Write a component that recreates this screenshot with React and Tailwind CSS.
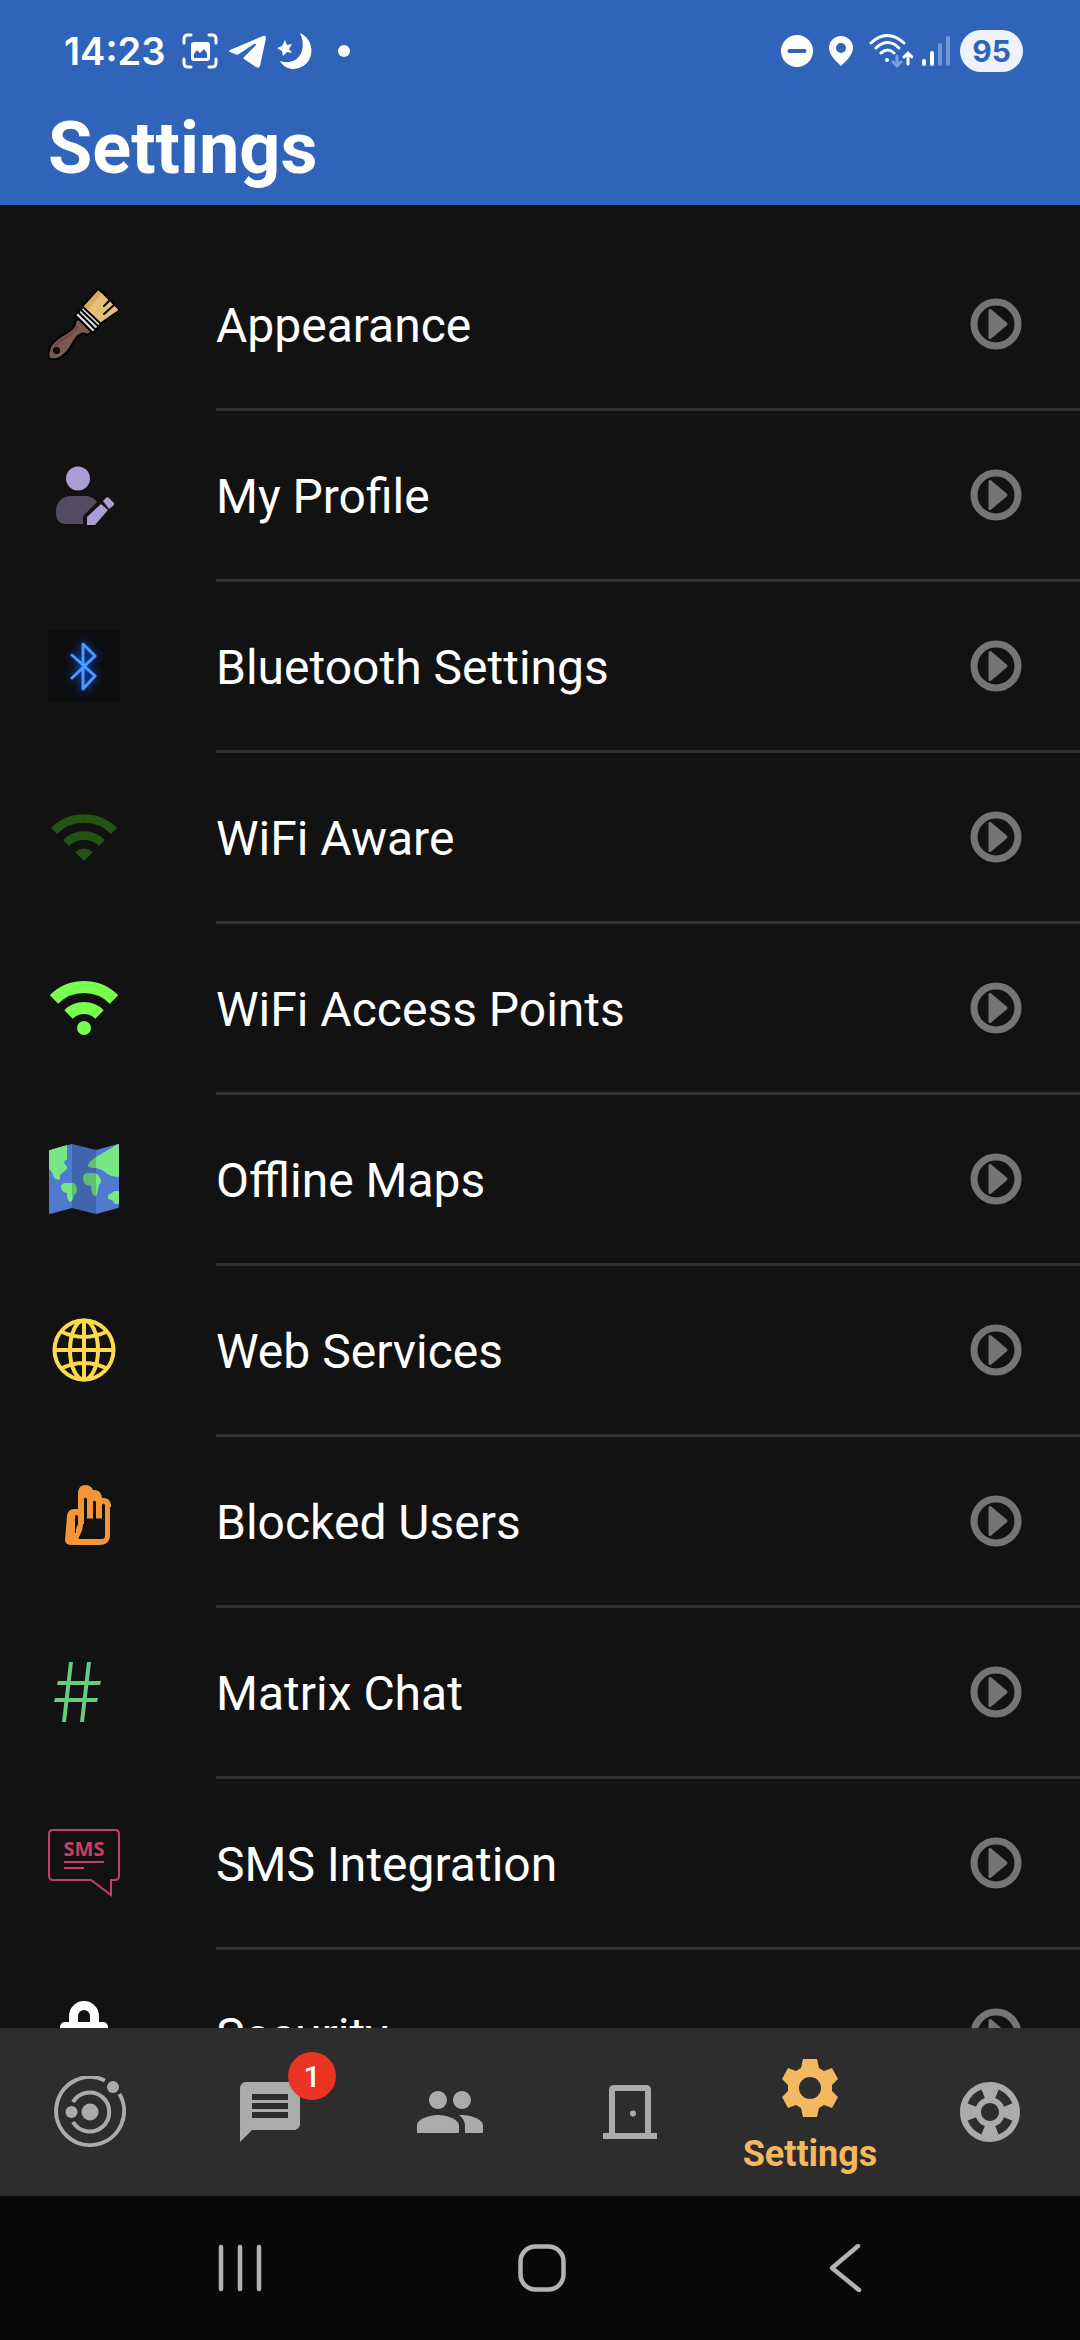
import React, { useState } from 'react';
import { MdMessage, MdPeople, MdSupport } from 'react-icons/md';

/* ---------- list icons, all on a 72 x 72 grid ---------- */

function Icon({ children, className = '' }) {
  return (
    <svg viewBox="0 0 72 72" className={`size-[72px] shrink-0 ${className}`} fill="none" aria-hidden="true">
      {children}
    </svg>
  );
}

function BrushIcon() {
  return (
    <Icon>
      <g stroke="#000" strokeWidth="2" strokeLinejoin="round" strokeLinecap="round">
        <path d="M27 33c1 5-2 8-7 11C12 49 2 54 1 63c-1 3-1 6 1 8 4 1 11 0 16-6 5-5 7-12 12-17 2-2 6-4 9-1l5-3-13-13z" fill="#7d594f" />
        <path d="M34 19 50 1l5 4 17 17-20 14z" fill="#e6bf77" />
        <path d="M27 27l8-8 18 17-8 9z" fill="#e3e3e3" />
        <path d="M30 24l18 18M33 22l18 17" />
        <path d="M61 13l-5 5M66 17l-10 9" />
        <circle cx="8.500" cy="62.500" r="2.500" fill="#121212" />
      </g>
      <path d="M36 18 50 3l3 3-13 16z" fill="#dba75c" />
      <path d="M28 37c0 5-4 8-8 10C12 51 3 57 3 65l3-5c5-6 19-12 24-20z" fill="#6a483f" />
    </Icon>
  );
}

function ProfileIcon() {
  return (
    <Icon>
      <circle cx="30" cy="19.500" r="12" fill="#ab9dd4" />
      <path d="M8 53C8 43 14 37 24 37h12c6 0 10 2 13 6L36 56c-1 1-1 2-1 9H18C11 65 8 61 8 53z" fill="#544b62" />
      <path d="M39 66v-8l14-13 7 6-13 15zM55 42l4-4 2 1 5 5v2l-5 4z" fill="#ab9dd4" />
    </Icon>
  );
}

function BluetoothIcon() {
  return (
    <Icon className="bg-[#0d0e10]">
      <path
        d="M24 25l23 21-12 13V14l12 12-23 22"
        stroke="#4b9bff"
        strokeWidth="3"
        strokeLinejoin="round"
        strokeLinecap="round"
        className="drop-shadow-[0_0_4px_#0a5cff]"
      />
    </Icon>
  );
}

function WifiAwareIcon() {
  return (
    <Icon>
      <g stroke="#245414" strokeWidth="8.600">
        <path d="M6 30a42.300 42.300 0 0 1 60 0" />
        <path d="M18 42a25.400 25.400 0 0 1 36 0" />
      </g>
      <path d="M27 51q9-7 18 0l-9 9z" fill="#245414" />
    </Icon>
  );
}

function WifiIcon() {
  return (
    <Icon>
      <g stroke="#76ff4d" strokeWidth="12">
        <path d="M6 27.500a42.400 42.400 0 0 1 60 0" />
        <path d="M20.500 42.500a22 22 0 0 1 31 0" />
      </g>
      <circle cx="36" cy="56" r="7" fill="#76ff4d" />
    </Icon>
  );
}

function MapIcon() {
  return (
    <Icon>
      <path d="M1 8q0-1 1-1l22-6 24 6 22-6q1 0 1 1v61q0 1-1 2l-22 6-24-6-22 6q-1 0-1-1z" fill="#4f7ad0" />
      <g fill="#78e684">
        <path d="M1 8q0-1 1-1l17-5v14l-3 3 1 3 2 1v3l-7 6 0 4-2 1-4-2-2-6-3-3z" />
        <path d="M71 2v32q-8 0-13-4-4-4-10-5-7 0-8-2 0-4 8-9L70 1z" />
        <path d="M13 44q0-4 5-4h7q4 1 4 6 0 4-3 6-1 7-4 7-3-1-3-9-6-1-6-6z" />
        <path d="M35 35q0-5 6-5h5q5 1 7 7 1 2-2 5-1 4-2 10-2 2-4 0-2-3-2-9-8-1-8-8z" />
        <path d="M71 48h-5l-2 2-4 2v4l4 1 3 4h4z" />
      </g>
      <path d="M24 1l24 6v64l-24-6z" fill="#000" fillOpacity=".17" />
    </Icon>
  );
}

function GlobeIcon() {
  return (
    <Icon>
      <g stroke="#fbdb4b" strokeWidth="4">
        <circle cx="36" cy="36" r="29.500" />
        <ellipse cx="36" cy="36" rx="14" ry="29.500" />
        <path d="M36 6v60M6 36h60M14 18q22 10 44 0M14 54q22-10 44 0" />
      </g>
    </Icon>
  );
}

function HandIcon() {
  return (
    <Icon>
      <path
        d="M17 55l2-24q1-7 7-7h4V7q1-7 7-7 6 0 8 5 8-1 9 8 8-1 9 7v2h-1v28q0 10-11 10H24q-7 0-7-5z"
        fill="#f39637"
      />
      <g fill="#121212">
        <path d="M36 14q1.500-3 3 0v19h18v18q0 3-3 3H31q-1-1 1-4 3-5 3-11h1z" />
        <path d="M45 17q1.500-3 3 0v17h-3zM54 20q1.500-3 3 0v14h-3z" />
        <path d="M27 31q1.500-2 3 0v8l-2 5v4h-1z" />
      </g>
      <path d="M39 33h6M48 33h6" stroke="#f39637" />
    </Icon>
  );
}

function HashIcon() {
  return (
    <Icon>
      <path d="M21 6h4l-7 60h-4zM39 6h4l-7 60h-4zM10 25h43l-1 4H9zM7 42h43l-1 4H6z" fill="#66cc80" />
    </Icon>
  );
}

function SmsIcon() {
  return (
    <Icon>
      <path
        d="M5 3h62q4 0 4 4v42q0 4-4 4h-4v15L43 53H5q-4 0-4-4V7q0-4 4-4z"
        stroke="#c73f64"
        strokeWidth="2"
      />
      <path d="M16 35h40M16 41h20" stroke="#c73f64" strokeWidth="2" />
      <text x="36" y="29" textAnchor="middle" fill="#c73f64" className="font-['Open_Sans',sans-serif] text-[20px] font-bold">
        SMS
      </text>
    </Icon>
  );
}

function LockIcon() {
  return (
    <Icon>
      <path d="M25.500 26V18a10.500 10.500 0 0 1 21 0v8" stroke="#fff" strokeWidth="9" />
      <rect x="12" y="24" width="48" height="44" rx="5" fill="#fff" />
    </Icon>
  );
}

function GoIcon() {
  return (
    <svg viewBox="0 0 52 52" className="size-[52px] shrink-0" fill="none" aria-hidden="true">
      <circle cx="26" cy="26" r="22" stroke="#757575" strokeWidth="7" />
      <path d="M20 12.500v27L36 26z" fill="#757575" stroke="#757575" strokeWidth="3" strokeLinejoin="round" />
    </svg>
  );
}

/* ---------- tab icons ---------- */

function OrbitIcon() {
  return (
    <Icon>
      <g stroke="currentColor" strokeWidth="4">
        <path d="M51 4.500A34 34 0 1 0 65.500 18" />
        <path d="M19 26a19.500 19.500 0 1 1 0 20" />
      </g>
      <g fill="currentColor">
        <circle cx="36" cy="36" r="8.500" />
        <circle cx="17.500" cy="36" r="6" />
        <circle cx="59" cy="11" r="6" />
      </g>
    </Icon>
  );
}

function DoorIcon() {
  return (
    <Icon>
      <path d="M9 57h54v6H9z" fill="currentColor" />
      <path d="M18 60V14q0-2 2-2h32q2 0 2 2v46" stroke="currentColor" strokeWidth="6" />
      <circle cx="39" cy="37.500" r="3" fill="currentColor" />
    </Icon>
  );
}

function GearIcon() {
  return (
    <Icon>
      <path
        fillRule="evenodd"
        fill="currentColor"
        d="M30 7h13l2 9 5 3 8-3 6 11-6 6v6l6 6-6 11-8-3-5 3-2 9H29l-2-9-5-3-8 3-6-11 6-6v-6l-6-6 6-11 8 3 5-3 2-9zM36 25a11 11 0 1 0 0 22 11 11 0 0 0 0-22z"
      />
    </Icon>
  );
}

/* ---------- status bar ---------- */

function StatusBar() {
  return (
    <div className="flex h-[102px] items-center justify-between pl-[64px] pr-[57px]">
      <div className="flex items-center">
        <span className="w-[118px] font-['Inter',sans-serif] text-[38px] leading-[48px] font-semibold">14:23</span>
        <svg viewBox="0 0 36 36" className="size-9" fill="none" aria-hidden="true">
          <path d="M2 10V6q0-4 4-4h3M27 2h3q4 0 4 4v4M34 26v4q0 4-4 4h-3M9 34H6q-4 0-4-4v-4" stroke="#fff" strokeWidth="3" strokeLinecap="round" />
          <path fillRule="evenodd" fill="#fff" d="M12 9h13q3 0 3 3v13q0 3-3 3H12q-3 0-3-3V12q0-3 3-3zM12 25h13v-5l-3-4-4 4-3-3-3 4z" />
        </svg>
        <svg viewBox="0 0 38 36" className="ml-[10px] h-9 w-[38px]" aria-hidden="true">
          <path fill="#fff" d="M2 17 35 3q3-1 3 2l-6 28q-1 3-4 1l-12-8q-1-1 0-2l12-12q0-2-2-1L11 21q-2 1-4 0l-5-2q-2-1 0-2z" />
        </svg>
        <svg viewBox="0 0 36 36" className="ml-[10px] size-9" aria-hidden="true">
          <path fill="#fff" d="M24 0c18 8 14 36-7 36-6 0-11-4-13-8C22 34 32 17 24 0z" />
          <path fill="#fff" d="M9 7l2 5 5-1-3 5 3 4-5-1-4 4-1-5-5-3 5-2z" />
        </svg>
        <span className="ml-[26px] size-3 rounded-full bg-white" />
      </div>

      <div className="flex items-center">
        <svg viewBox="0 0 32 32" className="size-8" aria-hidden="true">
          <circle cx="16" cy="16" r="16" fill="#fff" />
          <path d="M8.500 16h15" stroke="#2f64ba" strokeWidth="4" strokeLinecap="round" />
        </svg>
        <svg viewBox="0 0 24 30" className="ml-4 h-[30px] w-6" aria-hidden="true">
          <path fillRule="evenodd" fill="#fff" d="M12 0a12 12 0 0 1 12 12c0 7-8 14-12 18C8 26 0 19 0 12A12 12 0 0 1 12 0zM12 7a5 5 0 1 0 0 10 5 5 0 0 0 0-10z" />
        </svg>
        <svg viewBox="0 0 44 34" className="ml-4 h-[34px] w-[44px]" fill="none" stroke="#fff" strokeWidth="3" strokeLinecap="round" aria-hidden="true">
          <path d="M2 9q16-15 33 0M7 14q12-11 23 0M12 19q7-6 13 0" />
          <circle cx="18" cy="26" r="2" fill="#fff" stroke="none" />
          <path d="M28 22v10M24 28l4 4 4-4" stroke="#7d9fd9" />
          <path d="M39 30V19M35 23l4-4 4 4" />
        </svg>
        <svg viewBox="0 0 28 30" className="ml-[9px] h-[30px] w-7" strokeWidth="4" strokeLinecap="round" aria-hidden="true">
          <path d="M2 25v3M10 17v11" stroke="#fff" />
          <path d="M18 9v19M26 2v26" stroke="#7095d3" />
        </svg>
        <span className="ml-[10px] flex h-[42px] w-[63px] items-center justify-center rounded-full bg-[#eef2fb] font-['Inter',sans-serif] text-[30px] font-bold text-[#2f64ba]">
          95
        </span>
      </div>
    </div>
  );
}

const items = [
  { label: 'Appearance', icon: BrushIcon },
  { label: 'My Profile', icon: ProfileIcon },
  { label: 'Bluetooth Settings', icon: BluetoothIcon },
  { label: 'WiFi Aware', icon: WifiAwareIcon },
  { label: 'WiFi Access Points', icon: WifiIcon },
  { label: 'Offline Maps', icon: MapIcon },
  { label: 'Web Services', icon: GlobeIcon },
  { label: 'Blocked Users', icon: HandIcon },
  { label: 'Matrix Chat', icon: HashIcon },
  { label: 'SMS Integration', icon: SmsIcon },
  { label: 'Security', icon: LockIcon },
];

const tabs = [
  { id: 'nearby', name: 'Nearby', icon: OrbitIcon },
  { id: 'messages', name: 'Messages', icon: MdMessage, badge: 1 },
  { id: 'people', name: 'People', icon: MdPeople },
  { id: 'rooms', name: 'Rooms', icon: DoorIcon },
  { id: 'settings', name: 'Settings', icon: GearIcon },
  { id: 'help', name: 'Help', icon: MdSupport },
];

function SettingsRow({ label, icon: RowIcon }) {
  return (
    <li>
      <button type="button" className="flex w-full pl-12 text-left">
        <span className="flex h-[168px] items-center">
          <RowIcon />
        </span>
        <span className="ml-24 flex h-[171px] flex-1 items-center justify-between border-b-[3px] border-[#303030] pr-[58px]">
          <span className="pt-[3px] text-[48px] leading-[56px]">{label}</span>
          <GoIcon />
        </span>
      </button>
    </li>
  );
}

function TabBar({ active, onSelect }) {
  return (
    <nav className="grid h-[168px] shrink-0 grid-cols-6 bg-[#2d2d2d]">
      {tabs.map(({ id, name, icon: TabIcon, badge }) => (
        <button
          key={id}
          type="button"
          aria-label={name}
          onClick={() => onSelect(id)}
          className={`flex flex-col items-center ${active === id ? 'gap-1.5 pt-6 text-[#f4b860]' : 'justify-center text-[#ababab]'}`}
        >
          <span className="relative">
            <TabIcon className="size-[72px]" />
            {badge && (
              <span className="absolute -top-6 -right-[30px] flex size-12 items-center justify-center rounded-full bg-[#ea3323] text-[30px] font-medium text-white">
                {badge}
              </span>
            )}
          </span>
          {active === id && <span className="text-[36px] leading-[48px] font-bold">{name}</span>}
        </button>
      ))}
    </nav>
  );
}

function SystemNav() {
  return (
    <div className="grid h-[144px] shrink-0 grid-cols-3 items-center bg-[#090909] pl-[89px] pr-[84px]">
      <button type="button" aria-label="Recent apps" className="flex justify-center">
        <svg viewBox="0 0 48 48" className="size-12" stroke="#b3b3b3" strokeWidth="4.500" strokeLinecap="round">
          <path d="M5 3v42M24 3v42M43 3v42" />
        </svg>
      </button>
      <button type="button" aria-label="Home" className="flex justify-center">
        <svg viewBox="0 0 48 48" className="size-12" fill="none" stroke="#b3b3b3" strokeWidth="4.500">
          <rect x="2.500" y="2.500" width="43" height="43" rx="15" />
        </svg>
      </button>
      <button type="button" aria-label="Back" className="flex justify-center">
        <svg viewBox="0 0 48 48" className="size-12" fill="none" stroke="#b3b3b3" strokeWidth="4.500" strokeLinecap="round" strokeLinejoin="round">
          <path d="M37 2 11 24l27 22" />
        </svg>
      </button>
    </div>
  );
}

export default function App() {
  const [tab, setTab] = useState('settings');

  return (
    <div className="flex h-screen flex-col bg-[#121212] font-['Roboto',sans-serif] text-white">
      <header className="shrink-0 bg-[#2f64ba]">
        <StatusBar />
        <h1 className="px-12 pt-[5px] pb-[14px] text-[72px] leading-[84px] font-bold">Settings</h1>
      </header>

      <main className="min-h-0 flex-1 overflow-hidden pt-[35px]">
        <ul>
          {items.map((item) => (
            <SettingsRow key={item.label} {...item} />
          ))}
        </ul>
      </main>

      <TabBar active={tab} onSelect={setTab} />
      <SystemNav />
    </div>
  );
}
